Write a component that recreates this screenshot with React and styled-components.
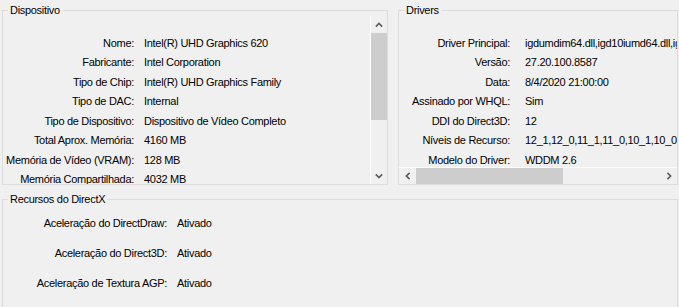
import React from 'react';
import styled, { createGlobalStyle } from 'styled-components';

const GlobalStyle = createGlobalStyle`
  html, body {
    margin: 0;
    background: #f0f0f0;
    overflow: hidden;
  }
  body {
    font-family: "Liberation Sans", Tahoma, Arial, sans-serif;
    font-size: 11px;
    color: #000;
  }
`;

const Page = styled.div`
  width: 679px;
  height: 307px;
  overflow: hidden;
  box-sizing: border-box;
  padding: 3px 1px 0 2px;
  letter-spacing: -0.3px;
`;

const TopRow = styled.div`
  display: flex;
  gap: 10px;
`;

const GroupBox = styled.fieldset`
  margin: ${({ $top }) => $top || 0}px 0 0 0;
  padding: 0;
  border: 1px solid #dcdcdc;
  min-width: 0;
  width: ${({ $width }) => $width}px;
  box-sizing: border-box;
  height: ${({ $height }) => ($height ? `${$height}px` : 'auto')};
`;

const Legend = styled.legend`
  margin-left: 5px;
  padding: 0 2px;
  line-height: 14px;
`;

const Panel = styled.div`
  display: flex;
  flex-direction: ${({ $column }) => ($column ? 'column' : 'row')};
  height: 168px;
  margin-top: -1px;
`;

const List = styled.div`
  flex: 1;
  min-width: 0;
  min-height: 0;
  overflow: hidden;
  padding-top: ${({ $padTop }) => $padTop}px;
`;

const Grid = styled.div`
  display: grid;
  grid-template-columns: ${({ $label }) => $label}px max-content;
  column-gap: ${({ $gap }) => $gap}px;
  grid-auto-rows: ${({ $row }) => $row}px;
  align-items: center;
  white-space: nowrap;
`;

const Label = styled.span`
  text-align: right;
`;

const Value = styled.span``;

const VScroll = styled.div`
  width: 16px;
  border-left: 1px solid #fff;
  display: flex;
  flex-direction: column;
  background: #f0f0f0;
`;

const HScroll = styled.div`
  height: 16px;
  border-top: 1px solid #fff;
  display: flex;
  background: #f0f0f0;
`;

const ArrowButton = styled.div`
  flex: 0 0 ${({ $size }) => $size}px;
  display: flex;
  align-items: center;
  justify-content: center;
  color: #606060;
`;

const VThumb = styled.div`
  height: 87px;
  background: #cdcdcd;
`;

const HThumb = styled.div`
  width: 147px;
  background: #cdcdcd;
`;

const Track = styled.div`
  flex: 1;
`;

const Chevron = ({ dir }) => {
  const paths = {
    up: 'M0.8 4.6 L4 1.4 L7.2 4.6',
    down: 'M0.8 1.4 L4 4.6 L7.2 1.4',
    left: 'M4.6 0.8 L1.4 4 L4.6 7.2',
    right: 'M1.4 0.8 L4.6 4 L1.4 7.2',
  };
  const vertical = dir === 'up' || dir === 'down';
  const w = vertical ? 8 : 6;
  const h = vertical ? 6 : 8;
  return (
    <svg width={w} height={h} viewBox={`0 0 ${w} ${h}`}>
      <path d={paths[dir]} fill="none" stroke="currentColor" strokeWidth="1.7" />
    </svg>
  );
};

const device = [
  ['Nome:', 'Intel(R) UHD Graphics 620'],
  ['Fabricante:', 'Intel Corporation'],
  ['Tipo de Chip:', 'Intel(R) UHD Graphics Family'],
  ['Tipo de DAC:', 'Internal'],
  ['Tipo de Dispositivo:', 'Dispositivo de Vídeo Completo'],
  ['Total Aprox. Memória:', '4160 MB'],
  ['Memória de Vídeo (VRAM):', '128 MB'],
  ['Memória Compartilhada:', '4032 MB'],
];

const drivers = [
  ['Driver Principal:', 'igdumdim64.dll,igd10iumd64.dll,igd10iumd64.dll'],
  ['Versão:', '27.20.100.8587'],
  ['Data:', '8/4/2020 21:00:00'],
  ['Assinado por WHQL:', 'Sim'],
  ['DDI do Direct3D:', '12'],
  ['Níveis de Recurso:', '12_1,12_0,11_1,11_0,10_1,10_0,9_3'],
  ['Modelo do Driver:', 'WDDM 2.6'],
];

const features = [
  ['Aceleração do DirectDraw:', 'Ativado'],
  ['Aceleração do Direct3D:', 'Ativado'],
  ['Aceleração de Textura AGP:', 'Ativado'],
];

const Rows = ({ items }) =>
  items.map(([label, value]) => (
    <React.Fragment key={label}>
      <Label>{label}</Label>
      <Value>{value}</Value>
    </React.Fragment>
  ));

export default function App() {
  return (
    <>
      <GlobalStyle />
      <Page>
        <TopRow>
          <GroupBox $width={386}>
            <Legend>Dispositivo</Legend>
            <Panel>
              <List $padTop={17}>
                <Grid $label={131} $gap={10} $row={19.5}>
                  <Rows items={device} />
                </Grid>
              </List>
              <VScroll>
                <ArrowButton $size={17}>
                  <Chevron dir="up" />
                </ArrowButton>
                <VThumb />
                <Track />
                <ArrowButton $size={17}>
                  <Chevron dir="down" />
                </ArrowButton>
              </VScroll>
            </Panel>
          </GroupBox>

          <GroupBox $width={280}>
            <Legend>Drivers</Legend>
            <Panel $column>
              <List $padTop={17}>
                <Grid $label={111} $gap={15} $row={19.5}>
                  <Rows items={drivers} />
                </Grid>
              </List>
              <HScroll>
                <ArrowButton $size={17}>
                  <Chevron dir="left" />
                </ArrowButton>
                <HThumb />
                <Track />
                <ArrowButton $size={17}>
                  <Chevron dir="right" />
                </ArrowButton>
              </HScroll>
            </Panel>
          </GroupBox>
        </TopRow>

        <GroupBox $width={676} $top={7} $height={130}>
          <Legend>Recursos do DirectX</Legend>
          <List $padTop={2}>
            <Grid $label={164} $gap={10} $row={30}>
              <Rows items={features} />
            </Grid>
          </List>
        </GroupBox>
      </Page>
    </>
  );
}
